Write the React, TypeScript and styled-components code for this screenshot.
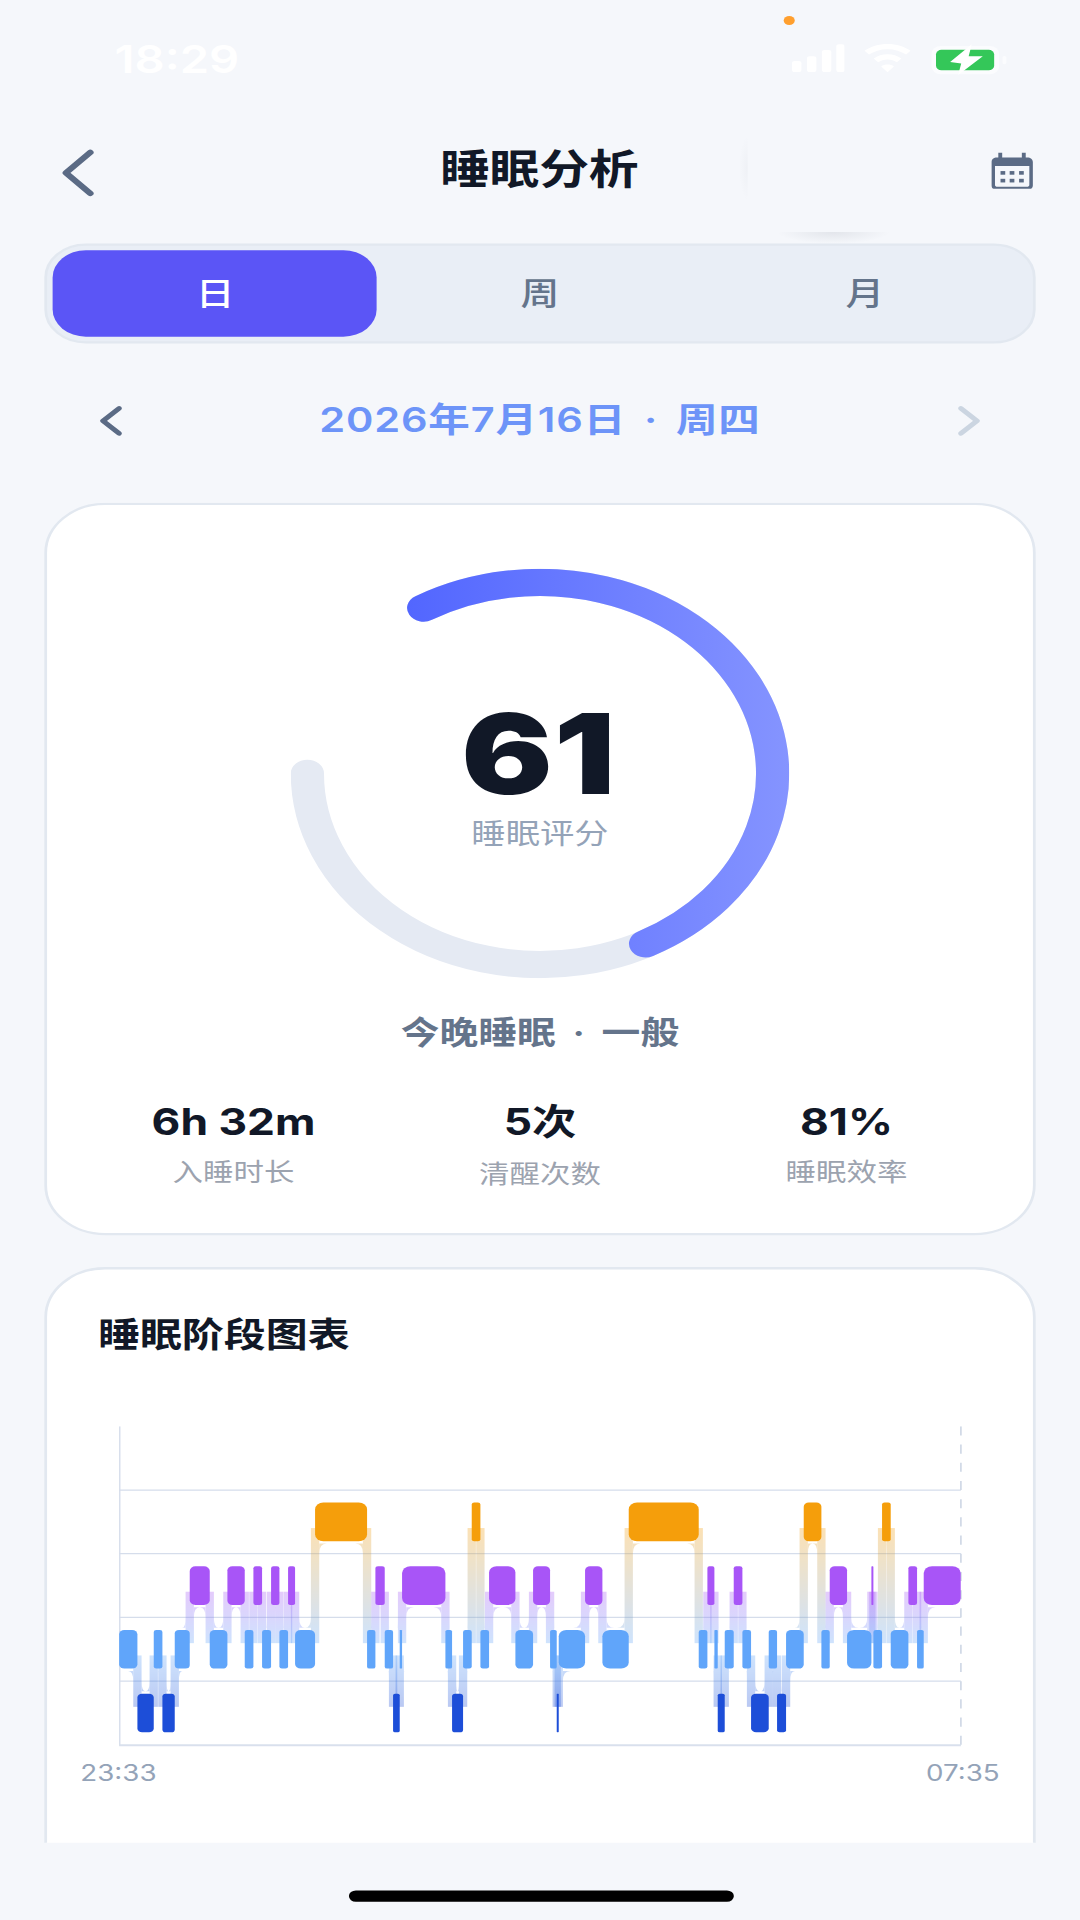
import React from "react";
import styled, { createGlobalStyle } from "styled-components";

const FONT = `Inter, "Noto Sans CJK SC", "Noto Sans", sans-serif`;
const BG = "#f5f7fb";

const Global = createGlobalStyle`
  html, body { margin: 0; padding: 0; background: ${BG}; overflow: hidden; }
  body { width: 1080px; height: 1920px; font-family: ${FONT}; }
`;

/* The reference is a 390x844 phone capture stretched to 1080x1920. */
const Screen = styled.div`
  position: relative;
  width: 390px;
  height: 844px;
  background: ${BG};
  overflow: hidden;
  display: flex;
  flex-direction: column;
  transform: scale(2.76923, 2.27488);
  transform-origin: 0 0;
`;

const StatusBar = styled.div`
  height: 53px;
  flex: none;
  position: relative;
  display: flex;
  align-items: flex-start;
  justify-content: space-between;
  padding: 15.6px 26px 0 41.4px;
  box-sizing: border-box;
`;
const Clock = styled.span`
  font-size: 17px;
  line-height: 20px;
  font-weight: 600;
  color: #ffffff;
`;
const StatusIcons = styled.div`
  display: flex;
  align-items: flex-start;
  gap: 7.2px;
  padding-top: 3.8px;
`;
const Dot = styled.span`
  position: absolute;
  left: 282.6px;
  top: 6.6px;
  width: 4.8px;
  height: 4.8px;
  border-radius: 50%;
  background: #ff9f2e;
`;
const GhostLeft = styled.span`
  position: absolute;
  left: 267px;
  top: 60px;
  width: 3px;
  height: 28px;
  background: radial-gradient(ellipse at 100% 50%, rgba(60, 70, 90, 0.035), rgba(60, 70, 90, 0) 72%);
`;
const GhostBottom = styled.span`
  position: absolute;
  left: 281px;
  top: 101.5px;
  width: 40px;
  height: 5.5px;
  background: radial-gradient(ellipse at 50% 0, rgba(60, 70, 90, 0.1), rgba(60, 70, 90, 0) 72%);
`;

const NavBar = styled.div`
  height: 45px;
  flex: none;
  display: grid;
  grid-template-columns: 1fr auto 1fr;
  align-items: center;
  padding: 0 16.6px 0 16px;
`;
const NavEnd = styled.div`
  display: flex;
  justify-content: flex-end;
  padding-bottom: 1px;
`;
const NavTitle = styled.h1`
  margin: 0 0 1px;
  font-size: 18px;
  line-height: 24px;
  font-weight: 700;
  letter-spacing: -0.1px;
  color: #111827;
`;

const Segment = styled.div`
  flex: none;
  margin: 9px 16px 0;
  height: 44px;
  box-sizing: border-box;
  padding: 2px;
  display: grid;
  grid-template-columns: repeat(3, 1fr);
  background: #e9eef6;
  border: 1px solid #e2e8f0;
  border-radius: 15px;
`;
const SegmentItem = styled.div<{ $active?: boolean }>`
  display: flex;
  align-items: center;
  justify-content: center;
  padding-bottom: 2px;
  box-sizing: border-box;
  font-size: 14px;
  font-weight: 500;
  border-radius: 12px;
  color: ${(p) => (p.$active ? "#ffffff" : "#64748b")};
  background: ${(p) => (p.$active ? "#5b55f6" : "transparent")};
`;

const DateRow = styled.div`
  flex: none;
  height: 36px;
  margin-top: 16px;
  padding: 0 36px;
  display: flex;
  align-items: center;
  justify-content: space-between;
`;
const DateText = styled.span`
  font-size: 15px;
  line-height: 20px;
  font-weight: 600;
  letter-spacing: 0.3px;
  word-spacing: 2.4px;
  color: #6d94f8;
`;

const Scroll = styled.div`
  flex: 1;
  min-height: 0;
  margin-top: 18px;
  margin-bottom: 34px;
  padding: 0 16px;
  overflow: hidden;
  display: flex;
  flex-direction: column;
  gap: 14px;
`;
const Card = styled.section`
  flex: none;
  box-sizing: border-box;
  background: #ffffff;
  border: 1px solid #e2e8f0;
  border-radius: 22px;
  padding: 0 12px;
`;
const ScoreCard = styled(Card)`
  height: 322.4px;
  padding-top: 28px;
  display: flex;
  flex-direction: column;
  align-items: stretch;
`;
const Gauge = styled.div`
  position: relative;
  width: 180px;
  height: 180px;
  align-self: center;
`;
const GaugeCenter = styled.div`
  position: absolute;
  left: 0;
  right: 0;
  top: 57px;
  display: flex;
  flex-direction: column;
  align-items: center;
`;
const ScoreValue = styled.span`
  font-size: 49px;
  line-height: 50px;
  font-weight: 900;
  letter-spacing: 0.4px;
  padding-right: 0.8px;
  color: #111827;
`;
const ScoreLabel = styled.span`
  font-size: 12.4px;
  line-height: 18px;
  margin-top: 1px;
  color: #94a3b8;
`;
const Verdict = styled.div`
  margin-top: 13.5px;
  text-align: center;
  font-size: 14px;
  line-height: 20px;
  font-weight: 600;
  word-spacing: 2.5px;
  color: #64748b;
`;
const Stats = styled.div`
  display: grid;
  grid-template-columns: repeat(3, 1fr);
  margin-top: 18px;
`;
const Stat = styled.div`
  display: flex;
  flex-direction: column;
  align-items: center;
`;
const StatValue = styled.span`
  font-size: 16px;
  line-height: 22px;
  font-weight: 700;
  color: #111827;
`;
const StatLabel = styled.span<{ $low?: boolean }>`
  font-size: 11px;
  line-height: 16px;
  margin-top: ${(p) => (p.$low ? 4.7 : 3.7)}px;
  color: #9ca3af;
`;

const ChartCard = styled(Card)`
  height: 300px;
  padding-top: 17.5px;
  border-radius: 22px 22px 0 0;
`;
const ChartTitle = styled.h2`
  margin: 0;
  padding-left: 6.4px;
  font-size: 15.15px;
  line-height: 22px;
  font-weight: 700;
  color: #111827;
`;
const ChartFrame = styled.div`
  margin: 29.4px 14px 0;
  height: 141px;
`;
const AxisLabels = styled.div`
  display: flex;
  justify-content: space-between;
  margin-top: 4.4px;
  font-size: 10px;
  line-height: 13px;
  color: #94a3b8;
`;

const HomeBar = styled.div`
  position: absolute;
  left: 125.6px;
  bottom: 8px;
  width: 139px;
  height: 5px;
  border-radius: 3px;
  background: #000000;
`;

/* ---------- drawings ---------- */

const Signal = () => (
  <svg width="19" height="13" viewBox="0 0 19 13" fill="#ffffff">
    <rect x="0" y="7.8" width="3.4" height="4.9" rx="1" />
    <rect x="5.4" y="5.7" width="3.4" height="7" rx="1" />
    <rect x="10.8" y="3" width="3.4" height="9.7" rx="1" />
    <rect x="16" y="0.5" width="3" height="12.2" rx="1" />
  </svg>
);
const Wifi = () => (
  <svg width="17" height="13" viewBox="0 0 17 13" fill="#ffffff">
    <path d="M8.5 0.3C5.3 0.3 2.4 1.4 0.2 3.3L1.8 5C3.6 3.5 5.9 2.6 8.5 2.6S13.4 3.5 15.2 5L16.8 3.3C14.6 1.4 11.7 0.3 8.5 0.3Z" />
    <path d="M8.5 4.9C6.6 4.9 4.9 5.6 3.5 6.7L5.1 8.4C6 7.7 7.2 7.2 8.5 7.2S11 7.7 11.9 8.4L13.5 6.7C12.1 5.6 10.4 4.9 8.5 4.9Z" />
    <path d="M8.5 9.4C7.6 9.4 6.8 9.7 6.2 10.2L8.5 12.8L10.8 10.2C10.2 9.7 9.4 9.4 8.5 9.4Z" />
  </svg>
);
const Battery = () => (
  <svg width="28" height="15" viewBox="0 0 28 15" style={{ marginTop: -0.8 }}>
    <rect x="0.4" y="1.2" width="24.4" height="12.4" rx="3.4" fill="#fbfcfe" />
    <rect x="26" y="5.6" width="1.4" height="3.6" rx="0.7" fill="#fbfcfe" />
    <rect x="2" y="2.9" width="21" height="9" rx="2" fill="#34c759" />
    <polygon points="14.9,0.5 7.1,8.3 11.1,8.9 10,14 18.9,5.7 13.8,5.7" fill="#ffffff" />
  </svg>
);
const BackIcon = () => (
  <svg width="28" height="28" viewBox="0 0 28 28" fill="none" stroke="#5b6b85" strokeWidth="2.4" strokeLinecap="round" strokeLinejoin="round">
    <path d="M16.6 5L7.8 14L16.6 23" />
  </svg>
);
const CalendarIcon = () => (
  <svg width="15" height="16.5" viewBox="0 0 15 16.5" fill="#5b6b85">
    <path d="M2.5 0H3.9V2.2H11V0H12.4V2.2H13C14.1 2.2 15 3.1 15 4.2V14.5C15 15.6 14.1 16.5 13 16.5H2C0.9 16.5 0 15.6 0 14.5V4.2C0 3.1 0.9 2.2 2 2.2H2.5ZM1.3 6V14.3C1.3 14.8 1.7 15.1 2.1 15.1H12.9C13.3 15.1 13.7 14.8 13.7 14.3V6Z" fillRule="evenodd" />
    {[4.1, 7.4, 10.8].map((x) =>
      [8.2, 11.6].map((y) => <rect key={`${x}-${y}`} x={x - 0.8} y={y} width="1.7" height="1.6" />)
    )}
  </svg>
);
const SmallChevron = ({ dir, color }: { dir: "l" | "r"; color: string }) => (
  <svg width="8" height="14" viewBox="0 0 8 14" fill="none" stroke={color} strokeWidth="2" strokeLinecap="round" strokeLinejoin="round">
    <path d={dir === "l" ? "M7 1.5L1.2 7L7 12.5" : "M1 1.5L6.8 7L1 12.5"} />
  </svg>
);

const R = 84;
const polar = (deg: number) => {
  const a = (deg * Math.PI) / 180;
  return [90 + R * Math.sin(a), 90 - R * Math.cos(a)];
};
const arc = (from: number, to: number) => {
  const [x1, y1] = polar(from);
  const [x2, y2] = polar(to);
  return `M${x1} ${y1}A${R} ${R} 0 ${to - from > 180 ? 1 : 0} 1 ${x2} ${y2}`;
};
const SCORE = 61;

const GaugeArc = () => (
  <svg width="180" height="180" viewBox="0 0 180 180" fill="none" strokeWidth="12" strokeLinecap="round">
    <defs>
      <linearGradient id="gaugeFill" gradientUnits="userSpaceOnUse" x1="42" y1="0" x2="180" y2="0">
        <stop offset="0" stopColor="#5266ff" />
        <stop offset="1" stopColor="#8594ff" />
      </linearGradient>
    </defs>
    <path d={arc(-30, 270)} stroke="#e5eaf3" />
    <path d={arc(-30, -30 + (300 * SCORE) / 100)} stroke="url(#gaugeFill)" />
  </svg>
);

/* Stage rows: 0 awake, 1 REM, 2 light, 3 deep. Boundaries are in reference units. */
const STAGE_COLOR = ["#f59e0b", "#a855f7", "#60a5fa", "#1d4ed8"];
const RAW: [number, number][] = [
  [2, 88], [3, 143], [2, 192], [3, 218], [2, 255], [1, 300], [2, 360], [1, 413], [2, 465], [1, 491],
  [2, 517], [1, 544], [2, 569], [1, 595], [2, 616], [0, 676], [2, 832], [1, 857], [2, 885], [3, 910],
  [2, 930], [1, 937], [2, 1067], [3, 1087], [2, 1120], [0, 1146], [2, 1172], [1, 1198], [2, 1277], [1, 1330],
  [2, 1381], [3, 1401], [2, 1407], [1, 1486], [2, 1538], [0, 1617], [2, 1827], [1, 1853], [2, 1874], [3, 1884],
  [2, 1905], [1, 1932], [2, 1958], [3, 1984], [2, 2037], [3, 2062], [2, 2089], [0, 2142], [2, 2195], [1, 2220],
  [2, 2272], [1, 2345], [2, 2351], [0, 2377], [2, 2403], [1, 2456], [2, 2482], [1, 2502],
];
const RAW_END = 2613;
const toX = (z: number) => (z - 88) * 0.12037;
const ROW = 28;
const BAR_H = 17;
const barTop = (s: number) => ROW * (s + 1) + 5.5;
const segs = RAW.map(([stage, start], i) => ({
  stage,
  x0: toX(start),
  x1: toX(i + 1 < RAW.length ? RAW[i + 1][1] : RAW_END),
}));

const Connector = ({ a, b, id }: { a: (typeof segs)[number]; b: (typeof segs)[number]; id: string }) => {
  const x = a.x1;
  const aUpper = a.stage < b.stage;
  const up = aUpper ? a : b;
  const low = aUpper ? b : a;
  const yTop = barTop(up.stage) + BAR_H / 2 + 2.7;
  const yBot = barTop(low.stage) + BAR_H / 2 - 2.7;
  const upEdge = barTop(up.stage) + BAR_H + 1;
  const lowEdge = barTop(low.stage) - 1;
  const hw = 1.5;
  const ry = 4.4;
  const upDir = aUpper ? -1 : 1;
  const lowDir = -upDir;
  const upR = Math.min(4.2, (up.x1 - up.x0) / 2);
  const lowR = Math.min(4.2, (low.x1 - low.x0) / 2);
  const fillet = (dir: number, rx: number, y: number, v: number) => {
    const sx = x + dir * hw;
    const ex = sx + dir * Math.max(rx - hw, 0.1);
    return `M${sx} ${y}L${ex} ${y}Q${sx} ${y} ${sx} ${y + v * ry}Z`;
  };
  return (
    <g opacity={0.3} fill={`url(#${id})`}>
      <defs>
        <linearGradient id={id} gradientUnits="userSpaceOnUse" x1="0" y1={yTop} x2="0" y2={yBot}>
          <stop offset="0" stopColor={STAGE_COLOR[up.stage]} />
          <stop offset="1" stopColor={STAGE_COLOR[low.stage]} />
        </linearGradient>
      </defs>
      <rect x={x - hw} y={yTop} width={hw * 2} height={yBot - yTop} />
      <path d={fillet(upDir, upR, upEdge, 1)} />
      <path d={fillet(lowDir, lowR, lowEdge, -1)} />
    </g>
  );
};

const StageChart = () => (
  <svg width="304.6" height="141" viewBox="0 0 304.6 141" style={{ display: "block" }}>
    {[1, 2, 3, 4].map((n) => (
      <line key={n} x1="0" x2="304" y1={ROW * n} y2={ROW * n} stroke="#d5ddeb" strokeWidth="0.55" />
    ))}
    <line x1="0.2" x2="0.2" y1="0" y2="140.4" stroke="#d5ddeb" strokeWidth="0.6" />
    <line x1="0" x2="304" y1="140.2" y2="140.2" stroke="#d9e0ed" strokeWidth="0.8" />
    <line x1="304" x2="304" y1="0" y2="140.4" stroke="#cfd8e6" strokeWidth="0.6" strokeDasharray="4 4" />
    {segs.slice(0, -1).map((s, i) => (
      <Connector key={i} a={s} b={segs[i + 1]} id={`link${i}`} />
    ))}
    {segs.map((s, i) => {
      const r = Math.min(3, (s.x1 - s.x0) / 3.5);
      return (
        <rect key={i} x={s.x0} y={barTop(s.stage)} width={s.x1 - s.x0} height={BAR_H} rx={r} ry={r} fill={STAGE_COLOR[s.stage]} />
      );
    })}
  </svg>
);

export default function App() {
  return (
    <>
      <Global />
      <Screen>
        <StatusBar>
          <Clock>18:29</Clock>
          <StatusIcons>
            <Signal />
            <Wifi />
            <Battery />
          </StatusIcons>
          <Dot />
        </StatusBar>
        <GhostLeft />
        <GhostBottom />
        <NavBar>
          <BackIcon />
          <NavTitle>睡眠分析</NavTitle>
          <NavEnd>
            <CalendarIcon />
          </NavEnd>
        </NavBar>
        <Segment>
          <SegmentItem $active>日</SegmentItem>
          <SegmentItem>周</SegmentItem>
          <SegmentItem>月</SegmentItem>
        </Segment>
        <DateRow>
          <SmallChevron dir="l" color="#5b6b85" />
          <DateText>2026年7月16日 · 周四</DateText>
          <SmallChevron dir="r" color="#cbd5e1" />
        </DateRow>
        <Scroll>
          <ScoreCard>
            <Gauge>
              <GaugeArc />
              <GaugeCenter>
                <ScoreValue>{SCORE}</ScoreValue>
                <ScoreLabel>睡眠评分</ScoreLabel>
              </GaugeCenter>
            </Gauge>
            <Verdict>今晚睡眠 · 一般</Verdict>
            <Stats>
              <Stat>
                <StatValue>6h 32m</StatValue>
                <StatLabel>入睡时长</StatLabel>
              </Stat>
              <Stat>
                <StatValue>5次</StatValue>
                <StatLabel $low>清醒次数</StatLabel>
              </Stat>
              <Stat>
                <StatValue>81%</StatValue>
                <StatLabel>睡眠效率</StatLabel>
              </Stat>
            </Stats>
          </ScoreCard>
          <ChartCard>
            <ChartTitle>睡眠阶段图表</ChartTitle>
            <ChartFrame>
              <StageChart />
            </ChartFrame>
            <AxisLabels>
              <span>23:33</span>
              <span>07:35</span>
            </AxisLabels>
          </ChartCard>
        </Scroll>
        <HomeBar />
      </Screen>
    </>
  );
}
